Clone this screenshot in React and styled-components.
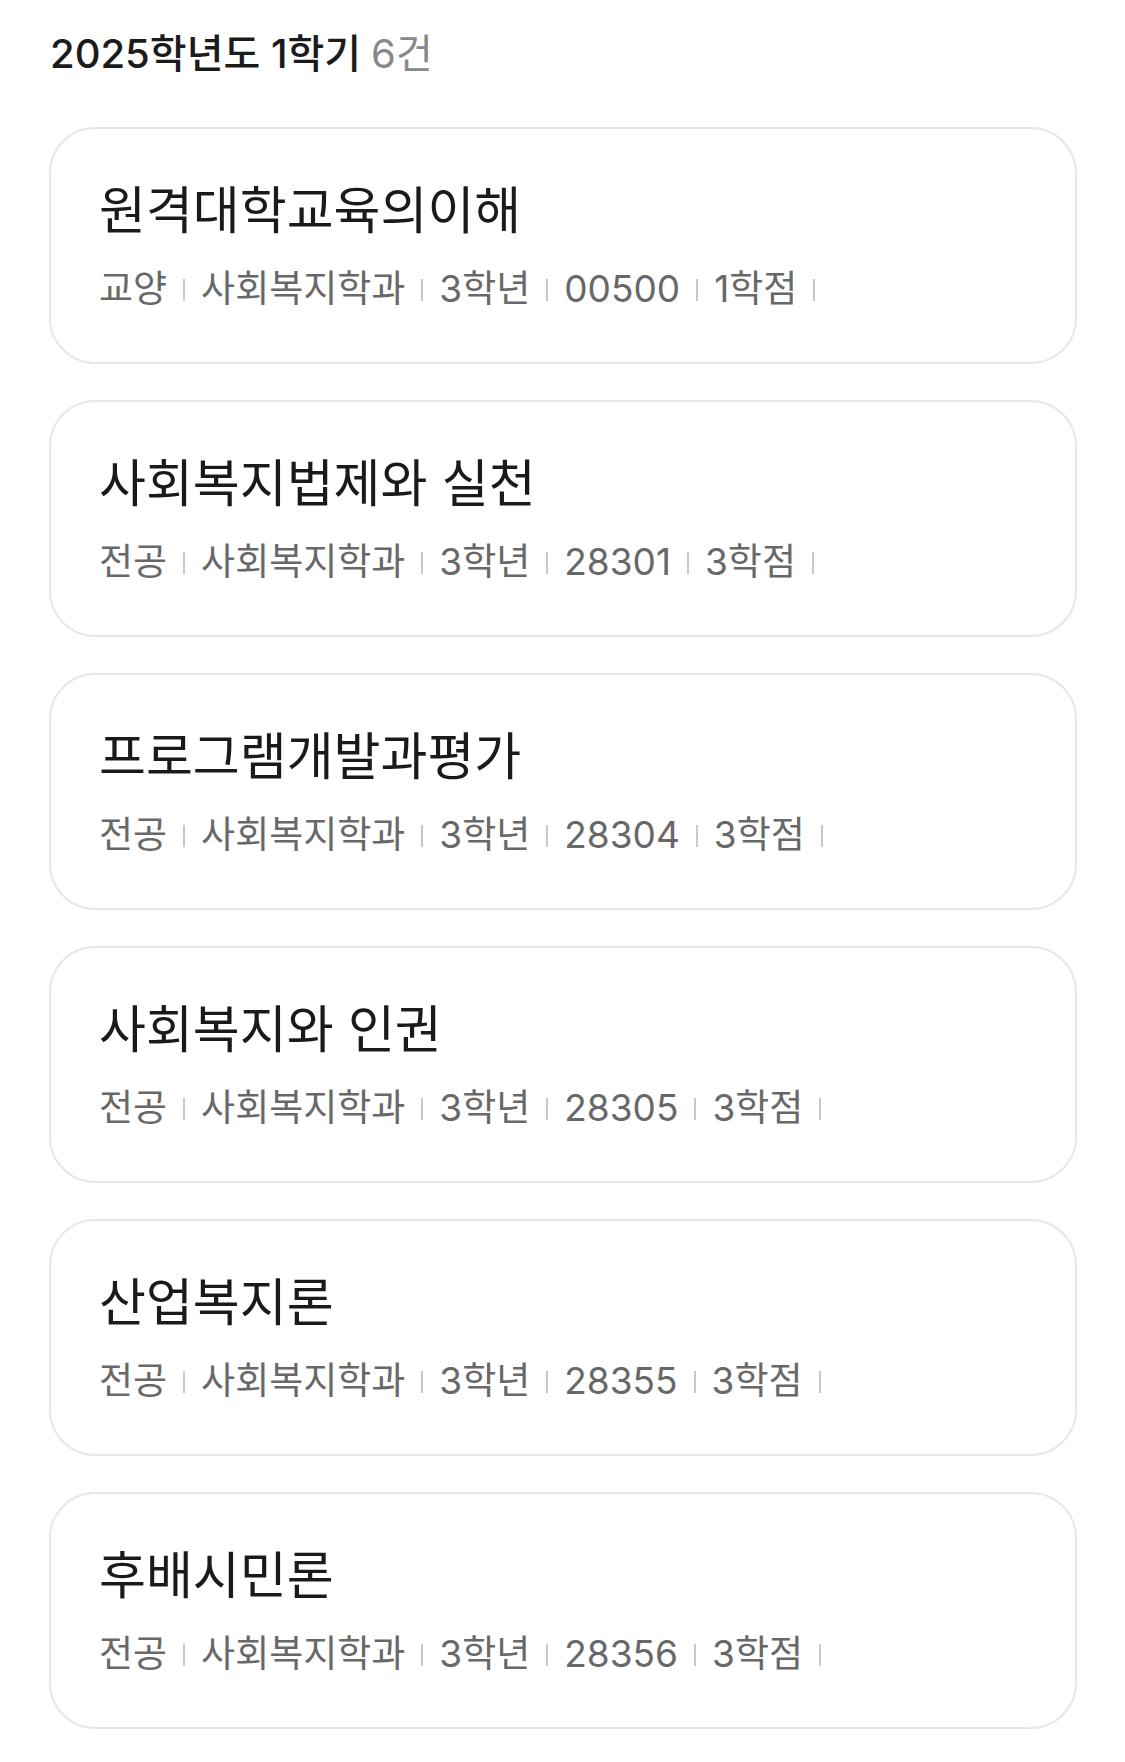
import React from "react";
import styled, { createGlobalStyle } from "styled-components";

const GlobalStyle = createGlobalStyle`
  html, body {
    margin: 0;
    padding: 0;
    background: #ffffff;
  }
  body {
    font-family: Inter, "Noto Sans CJK KR", "Noto Sans", sans-serif;
    color: #1a1a1a;
  }
`;

const Page = styled.div`
  padding: 24px 48px 34px 49px;
`;

const Heading = styled.h2`
  margin: 0 0 43px 1px;
  font-size: 40px;
  font-weight: 500;
  line-height: 60px;
  color: #1b1b1b;
`;

const Count = styled.span`
  color: #888888;
  font-weight: 400;
  margin-left: 10px;
`;

const List = styled.ul`
  list-style: none;
  margin: 0;
  padding: 0;
  display: flex;
  flex-direction: column;
  gap: 36px;
`;

const Card = styled.li`
  box-sizing: border-box;
  height: 237px;
  border: 2px solid #e8e8ea;
  border-radius: 46px;
  padding: 0 48px;
  display: flex;
  flex-direction: column;
  justify-content: center;
  gap: 26px;
`;

const Title = styled.div`
  font-size: 51px;
  line-height: 60px;
  font-weight: 400;
  color: #1a1a1a;
`;

const Meta = styled.div`
  display: flex;
  align-items: center;
  font-size: 37px;
  line-height: 44px;
  color: #686868;
`;

const Sep = styled.span`
  display: inline-block;
  width: 2px;
  height: 22px;
  background: #c9c9c9;
  margin: 2px 16px 0;
`;

const courses = [
  { name: "원격대학교육의이해", type: "교양", dept: "사회복지학과", year: "3학년", code: "00500", credit: "1학점" },
  { name: "사회복지법제와 실천", type: "전공", dept: "사회복지학과", year: "3학년", code: "28301", credit: "3학점" },
  { name: "프로그램개발과평가", type: "전공", dept: "사회복지학과", year: "3학년", code: "28304", credit: "3학점" },
  { name: "사회복지와 인권", type: "전공", dept: "사회복지학과", year: "3학년", code: "28305", credit: "3학점" },
  { name: "산업복지론", type: "전공", dept: "사회복지학과", year: "3학년", code: "28355", credit: "3학점" },
  { name: "후배시민론", type: "전공", dept: "사회복지학과", year: "3학년", code: "28356", credit: "3학점" },
];

export default function App() {
  return (
    <Page>
      <GlobalStyle />
      <Heading>
        2025학년도 1학기<Count>6건</Count>
      </Heading>
      <List>
        {courses.map((c) => (
          <Card key={c.code}>
            <Title>{c.name}</Title>
            <Meta>
              {[c.type, c.dept, c.year, c.code, c.credit].map((item) => (
                <React.Fragment key={item}>
                  <span>{item}</span>
                  <Sep />
                </React.Fragment>
              ))}
            </Meta>
          </Card>
        ))}
      </List>
    </Page>
  );
}
